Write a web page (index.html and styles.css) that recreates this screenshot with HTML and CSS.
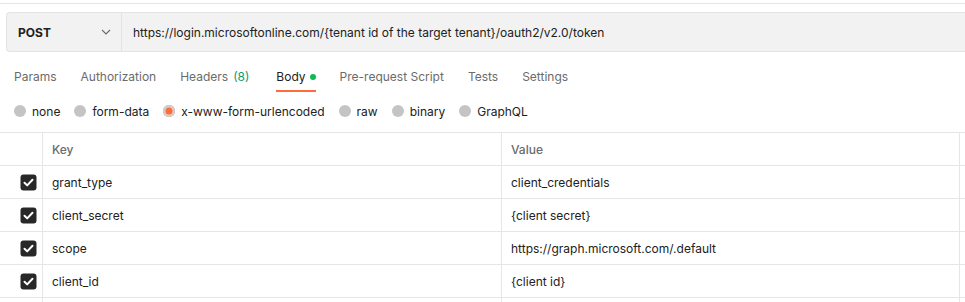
FILE: index.html
```html
<!DOCTYPE html>
<html>
<head>
<meta charset="utf-8">
<link rel="stylesheet" href="styles.css">
</head>
<body>
<div class="page">
  <div class="top-divider"></div>
  <div class="request-bar">
    <div class="method">
      <span class="method-name">POST</span>
      <svg class="chevron" width="10" height="6" viewBox="0 0 10 6"><path d="M1 1l4 4 4-4" fill="none" stroke="#6b6b6b" stroke-width="1.1"/></svg>
    </div>
    <div class="url">https://login.microsoftonline.com/{tenant id of the target tenant}/oauth2/v2.0/token</div>
  </div>
  <div class="tabs">
    <div class="tab">Params</div>
    <div class="tab">Authorization</div>
    <div class="tab">Headers <span class="count">(8)</span></div>
    <div class="tab active">Body <span class="dot"></span></div>
    <div class="tab">Pre-request Script</div>
    <div class="tab">Tests</div>
    <div class="tab">Settings</div>
  </div>
  <div class="body-types">
    <label class="radio"><span class="circle"></span>none</label>
    <label class="radio"><span class="circle"></span>form-data</label>
    <label class="radio"><span class="circle selected"></span>x-www-form-urlencoded</label>
    <label class="radio"><span class="circle"></span>raw</label>
    <label class="radio"><span class="circle"></span>binary</label>
    <label class="radio"><span class="circle"></span>GraphQL</label>
  </div>
  <div class="kv-table">
    <div class="row header">
      <div class="cell check"></div>
      <div class="cell">Key</div>
      <div class="cell">Value</div>
      <div class="cell rest"></div>
    </div>
    <div class="row">
      <div class="cell check"><svg class="cb" width="17" height="17" viewBox="0 0 17 17"><rect x="0.5" y="0.5" width="16" height="16" rx="3" fill="#282828"/><path d="M4.5 8.8l2.7 2.6 5.3-5.6" fill="none" stroke="#fff" stroke-width="2" stroke-linecap="round" stroke-linejoin="round"/></svg></div>
      <div class="cell">grant_type</div>
      <div class="cell">client_credentials</div>
      <div class="cell rest"></div>
    </div>
    <div class="row">
      <div class="cell check"><svg class="cb" width="17" height="17" viewBox="0 0 17 17"><rect x="0.5" y="0.5" width="16" height="16" rx="3" fill="#282828"/><path d="M4.5 8.8l2.7 2.6 5.3-5.6" fill="none" stroke="#fff" stroke-width="2" stroke-linecap="round" stroke-linejoin="round"/></svg></div>
      <div class="cell">client_secret</div>
      <div class="cell">{client secret}</div>
      <div class="cell rest"></div>
    </div>
    <div class="row">
      <div class="cell check"><svg class="cb" width="17" height="17" viewBox="0 0 17 17"><rect x="0.5" y="0.5" width="16" height="16" rx="3" fill="#282828"/><path d="M4.5 8.8l2.7 2.6 5.3-5.6" fill="none" stroke="#fff" stroke-width="2" stroke-linecap="round" stroke-linejoin="round"/></svg></div>
      <div class="cell">scope</div>
      <div class="cell">https://graph.microsoft.com/.default</div>
      <div class="cell rest"></div>
    </div>
    <div class="row">
      <div class="cell check"><svg class="cb" width="17" height="17" viewBox="0 0 17 17"><rect x="0.5" y="0.5" width="16" height="16" rx="3" fill="#282828"/><path d="M4.5 8.8l2.7 2.6 5.3-5.6" fill="none" stroke="#fff" stroke-width="2" stroke-linecap="round" stroke-linejoin="round"/></svg></div>
      <div class="cell">client_id</div>
      <div class="cell">{client id}</div>
      <div class="cell rest"></div>
    </div>
    <div class="row">
      <div class="cell check"></div>
      <div class="cell"></div>
      <div class="cell"></div>
      <div class="cell rest"></div>
    </div>
  </div>
</div>
</body>
</html>
```
FILE: styles.css
```css
* { box-sizing: border-box; }
html, body { margin: 0; padding: 0; background: #fff; }
body {
  font-family: Inter, "Open Sans", "Liberation Sans", sans-serif;
  font-size: 12px;
  color: #212121;
  overflow: hidden;
}
.page { width: 965px; height: 302px; overflow: hidden; }
.top-divider {
  margin-top: 3px;
  border-top: 1px solid #e6e6e6;
  height: 0;
}
.request-bar {
  margin-top: 8px;
  margin-left: 6px;
  height: 40px;
  display: flex;
  background: #f2f2f2;
  border: 1px solid #e3e3e3;
  border-right: none;
  border-radius: 4px 0 0 4px;
}
.method {
  width: 115px;
  display: flex;
  align-items: center;
  justify-content: space-between;
  padding: 0 10px 0 11px;
  border-right: 1px solid #e3e3e3;
}
.method-name { font-weight: 700; color: #212121; }
.url {
  display: flex;
  align-items: center;
  padding-left: 11px;
  white-space: nowrap;
}
.tabs {
  display: flex;
  gap: 24px;
  padding-left: 14px;
  margin-top: 9px;
}
.tab {
  padding-top: 8px;
  line-height: 16px;
  padding-bottom: 5px;
  border-bottom: 2px solid transparent;
  color: #6b6b6b;
  display: flex;
  align-items: center;
  white-space: nowrap;
}
.tab .count { color: #0a9e6a; margin-left: 5px; padding-right: 3px; }
.tab.active { color: #212121; border-bottom-color: #ff6c37; }
.dot {
  width: 6px; height: 6px; border-radius: 50%;
  background: #0cbb52;
  margin-left: 4px;
  display: inline-block;
}
.body-types {
  display: flex;
  align-items: center;
  gap: 14px;
  padding-left: 14px;
  height: 22px;
  margin-top: 8px;
}
.radio {
  display: flex;
  align-items: center;
  gap: 6px;
  color: #212121;
  white-space: nowrap;
}
.circle {
  width: 12px; height: 12px; border-radius: 50%;
  background: #c4c4c4;
  display: inline-block;
}
.circle.selected {
  background: #ff6c37;
  box-shadow: inset 0 0 0 2.5px #d0d0d0;
}
.kv-table {
  margin-top: 10px;
  border-top: 1px solid #e6e6e6;
}
.row {
  display: grid;
  grid-template-columns: 42px 459px 458px 1fr;
  height: 33px;
  border-bottom: 1px solid #e6e6e6;
}
.cell {
  display: flex;
  align-items: center;
  padding-left: 9px;
  border-left: 1px solid #e6e6e6;
  white-space: nowrap;
}
.cell.check { border-left: none; justify-content: flex-end; padding: 0 5px 0 0; }
.cell.rest { padding: 0; }
.header .cell { color: #6b6b6b; font-weight: 500; }
.cb { display: block; }
```
